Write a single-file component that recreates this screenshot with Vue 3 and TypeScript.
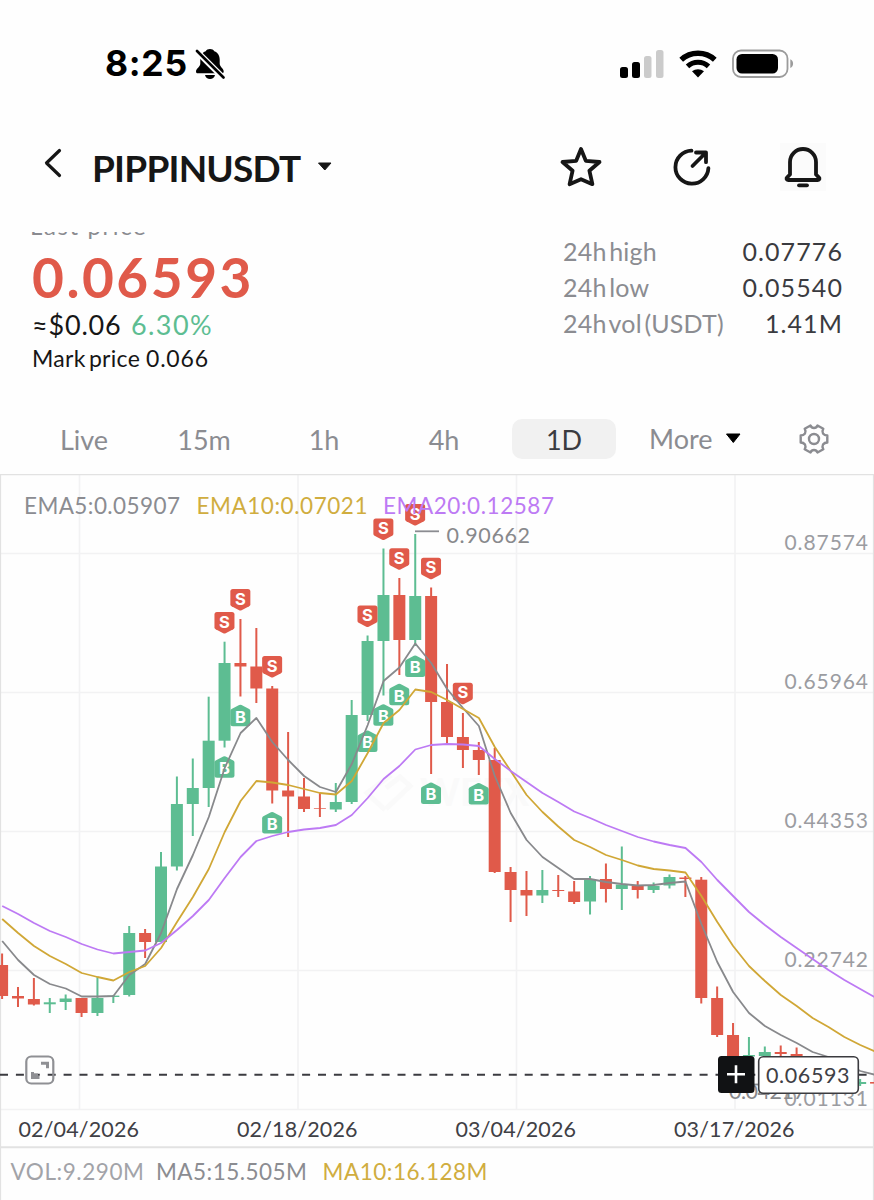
<script setup lang="ts">
type Candle = [dir: 'u' | 'd', high: number, top: number, bottom: number, low: number]

const STEP = 15.89
const cx = (i: number): number => 1.9 + i * STEP

const candles: Candle[] = [
  ['d', 953.5, 965, 996, 999], ['d', 987, 996, 998.5, 1007], ['d', 978, 999, 1004.5, 1005.5],
  ['u', 998, 1002.3, 1004.3, 1013], ['u', 994.5, 998.5, 1002, 1010], ['d', 998, 998, 1013, 1017],
  ['u', 977, 998, 1013, 1016], ['u', 995, 995.6, 997, 1003], ['u', 926, 933, 995, 996.5],
  ['d', 929, 933, 942, 958], ['u', 852, 866.5, 942, 942], ['u', 776.5, 804, 866.5, 870.5],
  ['u', 758.5, 788, 804, 836], ['u', 696.7, 740.7, 788, 807], ['u', 641.7, 663, 740.7, 747.5],
  ['d', 619, 663, 666.5, 696.5], ['d', 628, 666.5, 688.5, 703], ['d', 686, 688.5, 790.5, 803.5],
  ['d', 732, 790.5, 796.5, 837], ['d', 778, 796.5, 809, 812], ['d', 793, 808, 808.7, 817],
  ['u', 783, 802, 809.5, 812], ['u', 700, 715, 802, 804], ['u', 635.5, 641, 715, 721],
  ['u', 548.5, 595, 641, 695.5], ['d', 578, 595, 640, 675], ['u', 534, 596, 640, 646],
  ['d', 587.5, 596, 702, 774], ['d', 664, 702, 737, 745], ['d', 713, 737, 750, 768],
  ['d', 742, 750, 760, 775], ['d', 748, 760, 872, 873], ['d', 867, 872, 890, 922],
  ['d', 871, 890, 895.5, 916], ['u', 870, 890, 895.5, 903], ['d', 875, 890, 891, 897],
  ['d', 881, 891.5, 902, 904], ['u', 876, 879, 901.5, 914.5], ['d', 863.5, 879, 889, 902.5],
  ['u', 846.5, 884.5, 889, 910], ['d', 881, 886, 890, 898.5], ['u', 882.5, 886, 890, 893],
  ['u', 874.5, 877, 885.5, 888.5], ['d', 876, 877.5, 879, 897], ['d', 877, 879.7, 998, 1003.5],
  ['d', 986.5, 998, 1035, 1037], ['d', 1023, 1035, 1060, 1070], ['u', 1037, 1055, 1056.5, 1060],
  ['u', 1046.5, 1052, 1056, 1060], ['d', 1045.5, 1052, 1054, 1057], ['d', 1047.5, 1054, 1056, 1060],
  ['d', 1060, 1064, 1070, 1080], ['d', 1060, 1068, 1074, 1082], ['d', 1066, 1074, 1082, 1086],
  ['u', 1079, 1082, 1084, 1086], ['d', 1081, 1082, 1083.6, 1086],
]

const ema5 = [941, 960, 975, 984, 988.5, 996.5, 996.5, 996, 975, 964, 933, 889, 855, 817, 768, 733, 718, 742, 760, 776, 787, 792, 764, 725, 681, 667.5, 643.5, 663, 689, 708, 726, 776, 813, 840, 857, 868, 879, 879, 882, 884, 885.5, 885, 883, 881.5, 924, 962, 992, 1013, 1026, 1035, 1043, 1052, 1057, 1062, 1071, 1075]
const ema10 = [919, 933, 946, 956, 964, 973, 977, 980.5, 972, 966, 948, 922, 897, 869, 832, 801, 781, 782.5, 785, 789, 793, 794.5, 781, 753, 723, 710, 689.5, 692, 700, 709, 718, 747, 771, 795, 812, 826.5, 840, 847, 855, 860, 865.5, 869, 870.5, 872.5, 896, 922, 946, 966, 981, 995, 1006, 1018, 1027, 1037, 1045, 1052]
const ema20 = [906, 914, 923, 931, 937, 944, 949.5, 953.5, 952, 950.5, 943, 930, 916, 900, 878, 857, 841, 836, 832, 829.5, 828, 825, 815, 798, 779, 766, 749.5, 745, 744, 744.5, 746, 759, 771, 782, 793, 802, 811.5, 818, 825, 831, 837, 841.5, 845, 848, 862, 880, 896, 912, 925, 937, 948, 959, 970, 980, 989, 998]

const toPoints = (ys: number[]): string =>
  ys.map((y, i) => `${(cx(i) + 0.3).toFixed(1)},${y}`).join(' ')

const averages = [
  { cls: 'gray', points: toPoints(ema5) },
  { cls: 'gold', points: toPoints(ema10) },
  { cls: 'violet', points: toPoints(ema20) },
]

/* candle index and top edge of each trade badge */
const sells = [[14, 612], [15, 589], [17, 656], [23, 605.5], [24, 518.5], [25, 548.2], [26, 504], [27, 557.7], [29, 682.8]]
const buys = [[14, 756], [15, 704.5], [17, 811.7], [23, 730.2], [24, 704], [25, 683.5], [26, 655.2], [27, 782.2], [30, 782.8]]

const gridX = [79.5, 298, 516.5, 735]
const gridY = [553.5, 692.5, 831.5, 970.5, 1109.5]
const scale = [
  { y: 549.7, t: '0.87574' }, { y: 688.7, t: '0.65964' }, { y: 827.7, t: '0.44353' },
  { y: 966.7, t: '0.22742' }, { y: 1105.7, t: '0.01131' },
]
const dates = [
  { x: 18.5, t: '02/04/2026' }, { x: 237, t: '02/18/2026' },
  { x: 455.5, t: '03/04/2026' }, { x: 674, t: '03/17/2026' },
]
const legend = [
  { x: 24, w: 156, t: 'EMA5:0.05907', cls: 't-gray' },
  { x: 196.5, w: 171, t: 'EMA10:0.07021', cls: 't-gold' },
  { x: 383, w: 171, t: 'EMA20:0.12587', cls: 't-violet' },
]
const volume = [
  { x: 10.5, w: 133.5, t: 'VOL:9.290M', cls: 't-light' },
  { x: 156, w: 151, t: 'MA5:15.505M', cls: 't-gray' },
  { x: 322.5, w: 165, t: 'MA10:16.128M', cls: 't-gold' },
]
const stats = [
  { k: '24h high', v: '0.07776' },
  { k: '24h low', v: '0.05540' },
  { k: '24h vol (USDT)', v: '1.41M' },
]
const tabs = ['Live', '15m', '1h', '4h', '1D']
const activeTab = '1D'
</script>

<template>
  <main class="screen">
    <div class="status">
      <span class="time">8:25</span>
      <svg class="mute" width="30" height="32" viewBox="0 0 30 32">
        <path d="M15 1c1.800 0 3.600.8 4.300 2.200 3.700 1.300 5.400 4.600 5.400 8.400v4.200c0 3 4 5 4 7.600 0 1.300-.8 1.900-2.100 1.900H3C1.700 25.300 1 24.700 1 23.400c0-2.600 4.300-4.600 4.300-7.600v-4.200c0-3.800 1.700-7.100 5.400-8.400C11.400 1.800 13.200 1 15 1z" />
        <path d="M10 27h10c-.6 2.700-2.500 4-5 4s-4.400-1.300-5-4z" />
        <path d="M1 2.500L29 30.500" stroke="#fefefe" stroke-width="6" />
        <path d="M2 3L28.500 29.500" stroke="#000" stroke-width="2.600" stroke-linecap="round" />
      </svg>
      <div class="spacer" />
      <svg class="signal" width="45" height="28" viewBox="0 0 45 28">
        <rect x="0" y="17" width="8" height="11" rx="2.500" />
        <rect x="12" y="12" width="8" height="16" rx="2.500" />
        <rect x="24" y="6" width="7.500" height="22" rx="2.500" fill="#cbcbcb" />
        <rect x="36" y="0" width="7.500" height="28" rx="2.500" fill="#cbcbcb" />
      </svg>
      <svg class="wifi" width="38" height="28" viewBox="0 0 38 28">
        <path d="M2.200 9.800C11.500 1.100 26.500 1.100 35.800 9.800" fill="none" stroke="#000" stroke-width="5.400" />
        <path d="M8.500 16.300C14.300 10.900 23.700 10.900 29.500 16.300" fill="none" stroke="#000" stroke-width="5" />
        <path d="M13 21.300C16.500 18.400 21.500 18.400 25 21.300L19 27.400z" />
      </svg>
      <svg class="battery" width="62" height="30" viewBox="0 0 62 30">
        <rect x="1" y="1.500" width="54.500" height="26.500" rx="8" fill="none" stroke="#9b9b9b" stroke-width="1.800" />
        <rect x="4.500" y="5" width="41.500" height="19.500" rx="5.500" />
        <path d="M58.300 10.300c3.700 1.500 3.700 7.300 0 8.800z" fill="#9b9b9b" />
      </svg>
    </div>

    <header class="header">
      <svg class="back" width="18" height="30" viewBox="0 0 18 30">
        <path d="M15.500 2.500L2.500 15L15.500 27.500" />
      </svg>
      <h1 class="pair">PIPPINUSDT</h1>
      <svg class="caret" width="16" height="10" viewBox="0 0 16 10">
        <path d="M1.500 1h12.500L7.800 8z" fill="#161616" stroke="#161616" stroke-linejoin="round" />
      </svg>
      <div class="spacer" />
      <svg class="icon star" width="44" height="44" viewBox="0 0 44 44">
        <path d="M22 4L26.800 15.800L40.500 17L30.400 25.700L33.400 39.200L22 34.200L10.600 39.200L13.600 25.700L3.500 17L17.200 15.800z" />
      </svg>
      <svg class="icon share" width="44" height="44" viewBox="0 0 44 44">
        <path d="M21.500 5.700A16.500 16.500 0 1 0 38.400 23.100" />
        <path d="M22.500 21L35.500 8M26 7.500h10v9.700" />
      </svg>
      <div class="bell-box">
        <svg class="icon" width="44" height="44" viewBox="0 0 44 44">
          <path d="M9 29.500V17a13 13 0 0 1 26 0V29.500l2.800 2.800c1.200 1.300.7 2.700-1 2.700H7.200c-1.700 0-2.200-1.400-1-2.700z" />
          <path d="M18 40.300h8" />
        </svg>
      </div>
    </header>

    <section class="summary">
      <div class="quote">
        <div class="label">Last price</div>
        <div class="price">0.06593</div>
        <div class="fiat"><span class="usd">≈$0.06</span><span class="change">6.30%</span></div>
        <div class="mark"><span class="mark-key">Mark price</span><span class="mark-val">0.066</span></div>
      </div>
      <dl class="stats">
        <div v-for="s in stats" :key="s.k" class="stat">
          <dt>{{ s.k }}</dt>
          <dd>{{ s.v }}</dd>
        </div>
      </dl>
    </section>

    <nav class="tabs">
      <div v-for="t in tabs" :key="t" class="tab">
        <span class="pill" :class="{ active: t === activeTab }">{{ t }}</span>
      </div>
      <span class="more">More</span>
      <svg width="17" height="11" viewBox="0 0 17 11">
        <path d="M1.500 1h13.500L8.300 9.500z" stroke="#000" stroke-linejoin="round" />
      </svg>
      <svg class="gear" width="32" height="32" viewBox="0 0 32 32">
        <path d="M12.500 2.500 Q13.500 5 16 5 Q18.500 5 19.500 2.500 L25.300 5.700 Q23.800 8.300 25 10.500 Q26.500 12.500 29.300 12.500 V19.500 Q26.500 19.500 25 21.500 Q23.800 23.700 25.300 26.300 L19.500 29.500 Q18.500 27 16 27 Q13.500 27 12.500 29.500 L6.700 26.300 Q8.200 23.700 7 21.500 Q5.500 19.500 2.700 19.500 V12.500 Q5.500 12.500 7 10.500 Q8.200 8.300 6.700 5.700 Z" />
        <circle cx="16" cy="16" r="5" />
      </svg>
    </nav>

    <svg class="chart" width="874" height="726" viewBox="0 474 874 726">
      <g class="grid">
        <line v-for="x in gridX" :key="x" :x1="x" :x2="x" y1="475" y2="1109" />
        <line v-for="y in gridY" :key="y" x1="0" x2="874" :y1="y" :y2="y" />
      </g>
      <g class="frame">
        <path d="M0 474.700H874M.5 474V1200M873.500 474V1200" />
        <path d="M0 1147.300H874" stroke-width="2" />
      </g>

      <g class="watermark">
        <path d="M391 775l-24 18 18 17M386 788l14-11 10 9-24 23" />
        <text x="420" y="806">WEEX</text>
      </g>

      <g v-for="s in scale" :key="s.t" class="scale">
        <text :x="784.500" :y="s.y" textLength="83.500">{{ s.t }}</text>
      </g>

      <g v-for="(c, i) in candles" :key="i" :class="c[0] === 'u' ? 'up' : 'down'">
        <rect :x="cx(i) - 0.8" :y="c[1]" width="2" :height="c[4] - c[1]" />
        <rect :x="cx(i) - 5.8" :y="c[2]" width="12" :height="c[3] - c[2]" />
      </g>

      <g v-for="m in sells" :key="'s' + m[0]" :transform="`translate(${cx(m[0]) + 0.1} ${m[1]})`">
        <path class="down" d="M-7.500 0h15a2.500 2.500 0 0 1 2.500 2.500V15.200q0 1.300-1.200 2L1.200 21.200q-1.200.6-2.400 0L-8.800 17.200Q-10 16.500-10 15.200V2.500A2.500 2.500 0 0 1-7.500 0z" />
        <text class="badge" y="15.600">S</text>
      </g>
      <g v-for="m in buys" :key="'b' + m[0]" :transform="`translate(${cx(m[0]) + 0.1} ${m[1]})`">
        <path class="up" d="M-7.500 21.700h15a2.500 2.500 0 0 0 2.500-2.500V6.500q0-1.300-1.200-2L1.200.5q-1.200-.6-2.400 0L-8.800 4.500Q-10 5.200-10 6.500V19.200a2.500 2.500 0 0 0 2.500 2.500z" />
        <text class="badge" y="18">B</text>
      </g>

      <polyline v-for="a in averages" :key="a.cls" class="avg" :class="a.cls" :points="a.points" />

      <g class="peak">
        <path d="M415 531.300H439" />
        <text x="446.500" y="542.500" textLength="83.500">0.90662</text>
        <path d="M753 1084.500H765" />
        <text x="729" y="1099" textLength="77">0.04217</text>
      </g>

      <text v-for="l in legend" :key="l.t" class="legend" :class="l.cls" :x="l.x" y="513.600" :textLength="l.w">{{ l.t }}</text>

      <path class="last-line" d="M0 1074.700H867" />
      <g class="expand">
        <rect x="26.300" y="1056.500" width="27" height="27" rx="5" />
        <path stroke-width="3" d="M41 1063.300h6.500v5M32.500 1072v5.500h7M33 1075h5" />
      </g>
      <rect x="718" y="1056" width="36.500" height="37" rx="3.500" fill="#111214" />
      <path d="M727 1074.300h18M736 1065.300v18" stroke="#fff" stroke-width="2.600" />
      <rect x="758.700" y="1056.700" width="99.600" height="36.600" rx="4.500" fill="#fff" stroke="#3b3b3f" stroke-width="1.600" />
      <text class="last" x="766" y="1083.300" textLength="83.500">0.06593</text>

      <text v-for="d in dates" :key="d.t" class="date" :x="d.x" y="1137.300" textLength="120.500">{{ d.t }}</text>
      <text v-for="v in volume" :key="v.t" class="vol" :class="v.cls" :x="v.x" y="1179.700" :textLength="v.w">{{ v.t }}</text>
    </svg>
  </main>
</template>

<style>
body { background: #fff; }
</style>

<style scoped>
.screen {
  width: 874px;
  height: 1200px;
  overflow: hidden;
  background: #fefefe;
  color: #161616;
  font-family: Lato, "Noto Sans", sans-serif;
}
svg { display: block; flex: none; }
.spacer { flex: 1; }

.status {
  display: flex;
  align-items: center;
  height: 130px;
  box-sizing: border-box;
  padding: 0 80px 2px 105px;
}
.time { font: 700 35.5px/40px Inter, sans-serif; color: #000; letter-spacing: 0.7px; }
.mute { margin-left: 7px; }
.signal { margin-right: 14px; }
.wifi { margin-right: 15px; }

.header {
  display: flex;
  align-items: center;
  height: 102px;
  box-sizing: border-box;
  padding: 0 48px 28px 44px;
}
.back { margin-bottom: 9px; fill: none; stroke: #161616; stroke-width: 3.2; stroke-linecap: round; stroke-linejoin: round; }
.pair { width: 209px; margin: 2px 0 0 30px; font-size: 37px; line-height: 44px; font-weight: 700; letter-spacing: -0.8px; white-space: nowrap; }
.caret { margin-left: 16px; }
.icon { fill: none; stroke: #161616; stroke-width: 3.8; stroke-linecap: round; stroke-linejoin: round; }
.star { margin-right: 67px; }
.share { margin-right: 66px; }
.bell-box { background: #fbfbfb; padding: 2px 1px; }

.summary {
  display: flex;
  justify-content: space-between;
  height: 178px;
  box-sizing: border-box;
  padding: 0 32px 0 32px;
  overflow: hidden;
}
.label { margin: -21px 0 0 -2px; font-size: 24px; line-height: 30px; letter-spacing: 1.6px; color: #8a8b90; }
.price { margin-top: 6px; font-size: 55px; line-height: 60px; font-weight: 700; letter-spacing: 2.5px; color: #e05a4a; }
.fiat { display: flex; font-size: 27px; line-height: 36px; }
.usd { width: 99px; letter-spacing: 0.8px; }
.change { color: #5dbd92; letter-spacing: 1.4px; }
.mark { display: flex; font-size: 23px; line-height: 30px; }
.mark-key { width: 114px; letter-spacing: 0.3px; word-spacing: -3px; }
.mark-val { letter-spacing: 0.8px; }
.stats { width: 279px; margin: 1px 0 0; }
.stat { display: flex; justify-content: space-between; font-size: 25px; line-height: 36px; }
dt { color: #8b8c91; letter-spacing: 0.2px; word-spacing: -4px; }
dd { margin: 0 -1px 0 0; color: #3a3b40; letter-spacing: 1.1px; }

.tabs { display: flex; align-items: center; height: 64px; padding: 0 44px 7px 24px; box-sizing: border-box; font-size: 27px; color: #8b8c91; }
.tab { width: 120px; display: flex; justify-content: center; }
.pill { width: 104px; height: 40px; border-radius: 10px; line-height: 41px; text-align: center; }
.active { background: #f1f1f1; color: #3a3b40; }
.more { margin-left: 25px; margin-right: 12px; line-height: 40px; }
.gear { margin-left: auto; fill: none; stroke: #8b8c91; stroke-width: 2.4; stroke-linejoin: round; }

.grid { stroke: #f2f2f3; stroke-width: 1.6; }
.frame { stroke: #e2e2e2; stroke-width: 1.2; fill: none; }
.watermark { fill: none; stroke: #fafafa; stroke-width: 5; }
.watermark text { fill: #fafafa; stroke: none; font-size: 38px; font-weight: 700; }
.up { fill: #5dbd92; }
.down { fill: #e05a4a; }
.badge { fill: #fff; font: 700 16.5px Inter, sans-serif; text-anchor: middle; }
.avg { fill: none; stroke-width: 1.8; stroke-linejoin: round; }
.gray { stroke: #88898c; }
.gold { stroke: #d0a736; }
.violet { stroke: #bd7af4; }
.scale text { fill: #9b9ca1; font-size: 21px; }
.peak path { stroke: #8b8c91; stroke-width: 1.8; }
.peak text { fill: #88898c; font-size: 21.5px; }
.legend { font-size: 22.5px; }
.vol { font-size: 22.5px; }
.t-gray { fill: #8b8c91; }
.t-light { fill: #a2a3a8; }
.t-gold { fill: #d0ad3f; }
.t-violet { fill: #bd7af4; }
.last-line { stroke: #3b3b40; stroke-width: 2; stroke-dasharray: 8 7.9; }
.expand { fill: none; stroke: #8f9094; stroke-width: 2.2; }
.last, .date { fill: #3f4045; font-size: 21.5px; }
</style>
